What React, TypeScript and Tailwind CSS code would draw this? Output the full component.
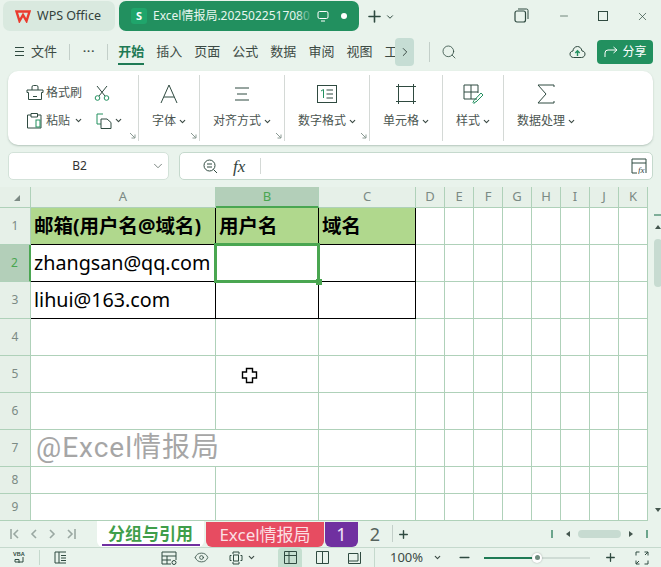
import React from "react";
import { ChevronDown, ChevronRight, Search, X, Minus, Plus, Eye } from "lucide-react";

const S = { fontFamily: '"Noto Sans", "Noto Sans CJK SC", sans-serif' };
const stroke = "#2f4a40";

function Ico({ w = 20, h = 20, children, vb }: { w?: number; h?: number; vb?: string; children: React.ReactNode }) {
  return (
    <svg width={w} height={h} viewBox={vb ?? `0 0 ${w} ${h}`} fill="none" stroke={stroke} strokeWidth={1} className="shrink-0">
      {children}
    </svg>
  );
}

function Caret() {
  return <ChevronDown size={9} strokeWidth={3} color="#3b4a44" className="shrink-0" />;
}

function Launcher() {
  return (
    <svg width="7" height="7" viewBox="0 0 7 7" fill="none" stroke="#8a9a93" className="absolute right-[2px] bottom-[2px]">
      <path d="M1 1L6 6M6 2.5V6H2.5" />
    </svg>
  );
}

function Group({ w, icon, label, launcher, last }: { w: string; icon: React.ReactNode; label: string; launcher?: boolean; last?: boolean }) {
  return (
    <div className={`relative flex h-[66px] flex-col items-center ${w} ${last ? "" : "border-r border-[#d4d9d6]"}`}>
      <div className="flex h-[34px] items-center justify-center pt-[4px]">{icon}</div>
      <div className="mt-[4px] flex items-center gap-[2px] pl-[1px] text-[12px] leading-[16px] text-[#4b5551]">
        <span>{label}</span>
        <Caret />
      </div>
      {launcher && <Launcher />}
    </div>
  );
}

const MENU = ["插入", "页面", "公式", "数据", "审阅", "视图"];
const LETTERS = ["D", "E", "F", "G", "H", "I", "J", "K"];

function ColHead({ children, active }: { children: React.ReactNode; active?: boolean }) {
  return (
    <div
      className={`flex items-center justify-center border-r border-b text-[13px] ${
        active ? "border-b-2 border-b-[#4aa651] border-r-[#afd1b9] bg-[#b3cfb9] text-[#4aa651]" : "border-[#afd1b9] bg-[#e6f0e8] text-[#7b8a84]"
      }`}
    >
      {children}
    </div>
  );
}

function RowHead({ n, active }: { n: number; active?: boolean }) {
  return (
    <div
      className={`flex items-center justify-center border-b border-r text-[12px] ${
        active ? "border-r-2 border-r-[#4aa651] border-b-[#afd1b9] bg-[#b3cfb9] text-[#4aa651]" : "border-[#afd1b9] bg-[#e6f0e8] text-[#7b8a84]"
      }`}
    >
      {n}
    </div>
  );
}

function Blank() {
  return <div className="border-r border-b border-[#afd1b9] bg-white" />;
}

function Black({ children, fill, bold }: { children?: React.ReactNode; fill?: boolean; bold?: boolean }) {
  return (
    <div
      className={`flex items-center overflow-visible whitespace-nowrap border-r border-b border-black pl-[3px] text-black ${fill ? "bg-[#b0d88d]" : "bg-white"} ${
        bold ? "text-[19.5px] font-bold" : "text-[19.7px]"
      }`}
    >
      {children}
    </div>
  );
}

export default function App() {
  const blankRows = [4, 5, 6, 7, 8, 9];
  return (
    <div className="relative flex h-[567px] w-[661px] flex-col overflow-hidden bg-[#e9f3ec]" style={S}>
      {/* title bar */}
      <div className="flex h-[34px] shrink-0 items-start pt-[1px]">
        <div className="ml-[3px] flex h-[30px] w-[112px] items-center gap-[6px] rounded-[7px] bg-[#d9e9df] pl-[12px]">
          <svg width="16" height="13" viewBox="0 0 16 13" fill="none" stroke="#ea3b2e" strokeWidth="2.4">
            <path d="M1.5 1.5H14.5L11.5 11L8 5L4.5 11Z" />
          </svg>
          <span className="text-[12.5px] text-[#33423c]">WPS Office</span>
        </div>
        <div className="relative ml-[4px] flex h-[30px] w-[240px] items-center rounded-[7px] bg-[#22905f] pl-[12px] text-white">
          <div className="flex h-[16px] w-[16px] items-center justify-center rounded-[3px] bg-[#1fa56b] text-[11px] font-bold">S</div>
          <div className="ml-[6px] w-[160px] overflow-hidden whitespace-nowrap text-[12px] text-[#e8f6ef]">Excel情报局.2025022517080</div>
          <div className="absolute left-[178px] top-0 h-full w-[16px] bg-gradient-to-r from-transparent to-[#22905f]" />
          <svg width="12" height="12" viewBox="0 0 12 12" fill="none" stroke="#fff" className="ml-[4px]">
            <rect x="1" y="1.5" width="10" height="7" rx="1.5" />
            <path d="M4 11H8" />
          </svg>
          <div className="ml-[12px] h-[6px] w-[6px] rounded-full bg-white" />
        </div>
        <Plus size={19} color={stroke} strokeWidth={2} className="ml-[6px] mt-[6px]" />
        <ChevronDown size={10} color={stroke} strokeWidth={2.4} className="ml-[1px] mt-[11px]" />
        <div className="ml-[119px] mt-[7px]">
          <Ico w={15} h={15}>
            <rect x="1" y="3" width="10.5" height="11" rx="2" strokeWidth="1.2" />
            <path d="M4 1H12.5Q14 1 14 2.5V11" />
          </Ico>
        </div>
        <Minus size={12} color={stroke} strokeWidth={1.3} className="ml-[29px] mt-[9px]" />
        <div className="ml-[28px] mt-[10px] h-[10px] w-[10px] border border-[#2f4a40]" />
        <X size={13} color={stroke} strokeWidth={1.3} className="ml-[28px] mt-[9px]" />
      </div>

      {/* menu row */}
      <div className="flex h-[34px] shrink-0 items-center pt-[1px] text-[13px] text-[#3c4a44]">
        <div className="ml-[15px] flex w-[9px] flex-col gap-[3px]">
          <div className="h-px w-full bg-[#2f4a40]" />
          <div className="h-px w-full bg-[#2f4a40]" />
          <div className="h-px w-full bg-[#2f4a40]" />
        </div>
        <span className="ml-[7px]">文件</span>
        <div className="ml-[12px] h-[16px] w-px bg-[#c3cfc9]" />
        <span className="ml-[13px] text-[11px] font-bold tracking-[1px]">···</span>
        <div className="ml-[12px] h-[16px] w-px bg-[#c3cfc9]" />
        <div className="relative ml-[10px] flex h-[28px] items-center font-semibold text-[#1f7a55]">
          开始
          <div className="absolute bottom-[1px] left-0 h-[2px] w-full bg-[#1f7a55]" />
        </div>
        <div className="ml-[12px] flex gap-[12px]">
          {MENU.map((m) => (
            <span key={m}>{m}</span>
          ))}
        </div>
        <div className="ml-[12px] w-[11px] whitespace-nowrap">工</div>
        <div className="flex h-[28px] w-[19px] items-center justify-center rounded-[4px] bg-[#c6ddd4]">
          <ChevronRight size={14} color="#33423c" strokeWidth={1.6} />
        </div>
        <div className="ml-[15px] h-[20px] w-px bg-[#c3cfc9]" />
        <Search size={16} color={stroke} strokeWidth={1.2} className="ml-[11px]" />
        <svg width="17" height="14" viewBox="0 0 17 14" fill="none" stroke={stroke} className="ml-[112px]">
          <path d="M4.5 12.5H12.5C15 12.5 16 10.5 16 9C16 7 14.5 6 13 6C12.5 3 10.5 1.5 8.5 1.5C6 1.5 4 3.5 4 6C2 6.2 1 7.5 1 9C1 11 2.5 12.5 4.5 12.5Z" />
          <path d="M8.5 11V6M6.3 8L8.5 5.8L10.7 8" stroke="#22905f" strokeWidth="1.4" />
        </svg>
        <div className="ml-[11px] flex h-[24px] w-[56px] items-center justify-center gap-[3px] rounded-[4px] bg-[#22905f] text-[12px] text-white">
          <svg width="15" height="13" viewBox="0 0 15 13" fill="none" stroke="#fff">
            <path d="M1 12V8Q1 5 4 5H12M9.5 2L13 5L9.5 8" />
          </svg>
          分享
        </div>
      </div>

      {/* ribbon */}
      <div className="mx-[8px] mt-[3px] flex h-[74px] shrink-0 items-start rounded-[10px] bg-white pl-[1px] pt-[4px] shadow-[0_1px_2px_rgba(80,110,95,0.35)]">
        <div className="relative h-[66px] w-[130px] border-r border-[#d4d9d6] text-[12px] text-[#4b5551]">
          <div className="flex h-[30px] items-center pl-[17px] pt-[5px]">
            <Ico w={18} h={17}>
              <path d="M1 6H17V8.5H15.5V15.5H2.5V8.5H1ZM6 6V3Q6 1.5 7.5 1.5H10.5Q12 1.5 12 3V6M7 12.5H11" />
            </Ico>
            <span className="ml-[2px]">格式刷</span>
            <svg width="16" height="16" viewBox="0 0 16 16" fill="none" stroke="#2f4a40" className="ml-[12px]">
              <path d="M3 1L11 11M13 1L5 11" />
              <circle cx="3.5" cy="13" r="2.3" stroke="#22905f" />
              <circle cx="12.5" cy="13" r="2.3" stroke="#22905f" />
            </svg>
          </div>
          <div className="flex h-[28px] items-center pl-[17px] pt-[3px]">
            <Ico w={17} h={17}>
              <path d="M5 3H1.5V16H15V3H12M5 1.5H11.5V5H5Z" />
              <rect x="10" y="8" width="4" height="7" stroke="#22905f" />
            </Ico>
            <span className="ml-[3px]">粘贴</span>
            <div className="ml-[4px]"><Caret /></div>
            <svg width="16" height="16" viewBox="0 0 16 16" fill="none" stroke="#2f4a40" className="ml-[13px]">
              <path d="M5 11H1V1H7" stroke="#22905f" />
              <path d="M5 6H11L15 9.5V15.5H5Z" />
            </svg>
            <div className="ml-[2px]"><Caret /></div>
          </div>
          <Launcher />
        </div>
        <Group
          w="w-[61px]"
          label="字体"
          launcher
          icon={
            <Ico w={20} h={22}>
              <path d="M2 20L10 2L18 20M5 14H15" />
            </Ico>
          }
        />
        <Group
          w="w-[85px]"
          label="对齐方式"
          launcher
          icon={
            <Ico w={16} h={18}>
              <path d="M1 3H15M3 9H13M1 15H15" />
            </Ico>
          }
        />
        <Group
          w="w-[85px]"
          label="数字格式"
          launcher
          icon={
            <Ico w={20} h={18}>
              <rect x="0.5" y="0.5" width="19" height="17" />
              <path d="M4 6L6.5 4.5V13" stroke="#22905f" />
              <path d="M9.5 5H16M9.5 9H16M9.5 13H16" />
            </Ico>
          }
        />
        <Group
          w="w-[73px]"
          label="单元格"
          icon={
            <Ico w={20} h={20}>
              <path d="M0 2.5H20M0 17.5H20M2.5 0V20M17.5 0V20" />
            </Ico>
          }
        />
        <Group
          w="w-[61px]"
          label="样式"
          icon={
            <Ico w={21} h={20}>
              <path d="M14 15H1V1H15V9M1 8H15M8 1V15" />
              <path d="M12 18L11 19.5L10 18.5L11 16.5L18 9L20 11L13 18Z" stroke="#22905f" />
            </Ico>
          }
        />
        <Group
          w="w-[84px]"
          label="数据处理"
          last
          icon={
            <Ico w={18} h={20}>
              <path d="M17 3V1H1L9 10L1 19H17V17" />
            </Ico>
          }
        />
      </div>

      {/* formula bar */}
      <div className="mx-[8px] mt-[7px] flex h-[28px] shrink-0 gap-[10px]">
        <div className="relative flex w-[161px] items-center justify-center rounded-[5px] border border-[#d3e2d9] bg-white pr-[18px] text-[12px] text-[#333]">
          B2
          <ChevronDown size={14} color="#55635d" strokeWidth={1.3} className="absolute right-[3px]" />
        </div>
        <div className="flex flex-1 items-center rounded-[5px] border border-[#c5d9cd] bg-white pl-[23px]">
          <Ico w={15} h={15}>
            <circle cx="6.5" cy="6.5" r="5.5" />
            <path d="M4 5H9M4 8H9M10.5 10.5L14 14" />
          </Ico>
          <span className="ml-[15px] w-[14px] text-[17px] italic leading-none text-[#33423c]" style={{ fontFamily: '"Liberation Serif", serif' }}>
            fx
          </span>
          <div className="ml-[13px] h-[16px] w-px bg-[#d4d9d6]" />
          <div className="ml-auto mr-[5px]">
            <svg width="16" height="16" viewBox="0 0 16 16" fill="none" stroke={stroke}>
              <path d="M6 15H1V1H15V15M1 5H15" />
              <text x="7" y="15" fontSize="9" fontStyle="italic" stroke="none" fill="#33423c" fontFamily="Liberation Serif">fx</text>
            </svg>
          </div>
        </div>
      </div>

      {/* sheet */}
      <div className="relative mt-[7px] flex h-[334px] shrink-0">
        <div className="grid h-full w-[648px] grid-cols-[31px_185px_103px_97px_repeat(8,29px)] grid-rows-[21px_repeat(7,37px)_27px_27px] text-[13px]">
          <div className="flex items-center justify-center border-r border-b border-[#afd1b9] bg-[#e6f0e8]">
            <div className="ml-[3px] mt-[1px] h-0 w-0 border-b-[6px] border-l-[6px] border-b-[#7c8a84] border-l-transparent" />
          </div>
          <ColHead>A</ColHead>
          <ColHead active>B</ColHead>
          <ColHead>C</ColHead>
          {LETTERS.map((l) => (
            <ColHead key={l}>{l}</ColHead>
          ))}

          <RowHead n={1} />
          <Black fill bold>邮箱(用户名@域名)</Black>
          <Black fill bold>用户名</Black>
          <Black fill bold>域名</Black>
          {LETTERS.map((l) => <Blank key={l} />)}

          <RowHead n={2} active />
          <Black>zhangsan@qq.com</Black>
          <Black />
          <Black />
          {LETTERS.map((l) => <Blank key={l} />)}

          <RowHead n={3} />
          <Black>lihui@163.com</Black>
          <Black />
          <Black />
          {LETTERS.map((l) => <Blank key={l} />)}

          {blankRows.map((r) => (
            <React.Fragment key={r}>
              <RowHead n={r} />
              {r === 7 ? (
                <div className="flex items-center overflow-visible whitespace-nowrap border-b border-[#afd1b9] bg-white pl-[5px] text-[28px] tracking-[1px] text-[#a6a6a6]" style={{ fontFamily: 'Roboto, "Noto Sans CJK SC", sans-serif' }}>
                  <span className="relative z-10">@Excel情报局</span>
                </div>
              ) : (
                <Blank />
              )}
              <Blank />
              <Blank />
              {LETTERS.map((l) => <Blank key={l} />)}
            </React.Fragment>
          ))}
        </div>

        {/* selection */}
        <div className="absolute left-[214px] top-[56px] h-[40px] w-[106px] border-[3px] border-[#4aa651]" />
        <div className="absolute left-[316px] top-[92px] h-[6px] w-[6px] bg-[#4aa651]" />

        {/* cell cursor */}
        <svg width="17" height="17" viewBox="0 0 17 17" className="absolute left-[241px] top-[180px]" fill="#fff" stroke="#000" strokeWidth="1.4">
          <path d="M5.5 1.5H11.5V5H15.5V11H11.5V15.5H5.5V11H1.5V5H5.5Z" />
        </svg>

        {/* scrollbar */}
        <div className="flex flex-1 flex-col items-start bg-[#e9f3ec] pl-[6px] pt-[27px]">
          <div className="h-[2px] w-[7px] bg-[#7fae99]" />
          <div className="ml-px mt-[9px] h-0 w-0 border-x-[3px] border-b-[4px] border-x-transparent border-b-[#44564e]" />
          <div className="mt-[10px] h-[48px] w-[8px] shrink-0 rounded-full bg-[#c7dbd1]" />
          <div className="ml-px mb-[9px] mt-auto h-0 w-0 border-x-[3px] border-t-[4px] border-x-transparent border-t-[#44564e]" />
        </div>
      </div>

      {/* sheet tabs */}
      <div className="flex h-[27px] shrink-0 items-start border-b border-[#c5d9cd] text-[#3c4a44]">
        <div className="flex h-[26px] w-[97px] items-center gap-[10px] pl-[10px] text-[#9aa8a2]">
          <svg width="10" height="10" viewBox="0 0 10 10" fill="none" stroke="currentColor" strokeWidth="1.6"><path d="M1 0V10M8 1L4 5L8 9" /></svg>
          <svg width="8" height="10" viewBox="0 0 8 10" fill="none" stroke="currentColor" strokeWidth="1.6"><path d="M6 1L2 5L6 9" /></svg>
          <svg width="8" height="10" viewBox="0 0 8 10" fill="none" stroke="currentColor" strokeWidth="1.6"><path d="M2 1L6 5L2 9" /></svg>
          <svg width="10" height="10" viewBox="0 0 10 10" fill="none" stroke="currentColor" strokeWidth="1.6"><path d="M9 0V10M2 1L6 5L2 9" /></svg>
        </div>
        <div className="relative flex h-[26px] w-[107px] items-center justify-center rounded-b-[6px] bg-white text-[17px] font-semibold text-[#3f9e4a]">
          分组与引用
          <div className="absolute bottom-[1px] left-[5px] h-[2px] w-[98px] bg-[#7030a0]" />
        </div>
        <div className="ml-[2px] mt-[1px] flex h-[25px] w-[118px] items-center justify-center rounded-b-[6px] bg-[#e74c61] text-[17px] text-[#fbdfe3]">
          Excel情报局
        </div>
        <div className="ml-px mt-[1px] flex h-[25px] w-[33px] items-center justify-center rounded-b-[6px] bg-[#7030a0] text-[18px] text-[#f3e6f8]">
          1
        </div>
        <div className="flex h-[26px] w-[34px] items-center justify-center text-[18px] text-[#55635d]">2</div>
        <div className="mt-[4px] h-[17px] w-px bg-[#c3cfc9]" />
        <Plus size={13} color={stroke} strokeWidth={2.6} className="ml-[4px] mt-[7px]" />
        <div className="ml-auto mr-[13px] mt-[5px] flex h-[16px] items-center">
          <div className="h-[8px] w-[2px] bg-[#6ba58c]" />
          <div className="ml-[13px] h-0 w-0 border-y-[3px] border-r-[4px] border-y-transparent border-r-[#44564e]" />
          <div className="ml-[8px] h-[8px] w-[43px] rounded-full bg-[#c7dbd1]" />
          <div className="ml-[8px] h-0 w-0 border-y-[3px] border-l-[4px] border-y-transparent border-l-[#44564e]" />
          <div className="ml-[13px] h-[8px] w-[2px] bg-[#6ba58c]" />
        </div>
      </div>

      {/* status bar */}
      <div className="flex h-[19px] shrink-0 items-center text-[#3c4a44]">
        <div className="flex w-[40px] justify-center border-r border-[#c5d9cd]">
          <svg width="15" height="15" viewBox="0 0 15 15" fill="none" stroke={stroke}>
            <text x="1" y="6" fontSize="5.5" stroke="none" fill="#2f4a40" fontWeight="700" fontFamily="Liberation Sans">VBA</text>
            <path d="M11 7V12H3V9.5H7V13" />
          </svg>
        </div>
        <svg width="13" height="13" viewBox="0 0 13 13" fill="none" stroke={stroke} className="ml-[14px] shrink-0">
          <path d="M12 1H1V12H12M5 1V12M7 4.5H12M7 7H12M7 9.5H12" />
        </svg>
        <svg width="16" height="14" viewBox="0 0 16 14" fill="none" stroke={stroke} className="ml-[94px] shrink-0">
          <path d="M10 13H1V1H15V9M1 5H15M1 9H10M6 5V13" />
          <circle cx="13" cy="11.5" r="2" />
        </svg>
        <Eye size={15} color={stroke} strokeWidth={1.3} className="ml-[17px] shrink-0" />
        <svg width="14" height="14" viewBox="0 0 14 14" fill="none" stroke={stroke} className="ml-[20px] shrink-0">
          <rect x="4.5" y="4" width="5" height="6" />
          <path d="M4 3V1H10V3M4 11V13H10V11M2.5 4.5H1V9.5H2.5M11.5 4.5H13V9.5H11.5" />
        </svg>
        <div className="ml-[4px]"><Caret /></div>
        <div className="ml-[22px] flex h-[19px] w-[24px] shrink-0 items-center justify-center rounded-t-[3px] bg-[#c5dfd0]">
          <svg width="13" height="13" viewBox="0 0 13 13" fill="none" stroke={stroke}>
            <path d="M.5.5H12.5V12.5H.5ZM.5 4.5H12.5M5 .5V12.5" />
          </svg>
        </div>
        <svg width="13" height="13" viewBox="0 0 13 13" fill="none" stroke={stroke} className="ml-[14px] shrink-0">
          <path d="M.5.5H12.5V12.5H.5ZM6.5.5V12.5" />
        </svg>
        <svg width="13" height="13" viewBox="0 0 13 13" fill="none" stroke={stroke} className="ml-[19px] shrink-0">
          <path d="M.5 2.5H10V10H.5ZM12.5 1V12.5H.5V10" />
        </svg>
        <div className="ml-[13px] w-[59px] shrink-0 border-l border-[#c5d9cd] pl-[15px] text-[13px] leading-[19px]">100%</div>
        <Caret />
        <Minus size={15} color={stroke} strokeWidth={2.2} className="ml-[15px] shrink-0" />
        <div className="relative ml-[12px] h-[2px] w-[106px] shrink-0 bg-[#cfdcd5]">
          <div className="h-full w-[53px] bg-[#1f7a55]" />
          <div className="absolute left-[48px] top-[-4px] flex h-[10px] w-[10px] items-center justify-center rounded-full bg-white shadow-[0_0_2px_rgba(0,0,0,0.3)]">
            <div className="h-[5px] w-[5px] rounded-full bg-[#6d8a7d]" />
          </div>
        </div>
        <Plus size={13} color={stroke} strokeWidth={2.4} className="ml-[14px] shrink-0" />
        <svg width="14" height="14" viewBox="0 0 14 14" fill="none" stroke={stroke} className="ml-[18px] shrink-0">
          <path d="M1 4.5V1H4.5M9.5 1H13V4.5M13 9.5V13H9.5M4.5 13H1V9.5M1 13L4 10M13 1L10 4" />
        </svg>
      </div>
    </div>
  );
}
